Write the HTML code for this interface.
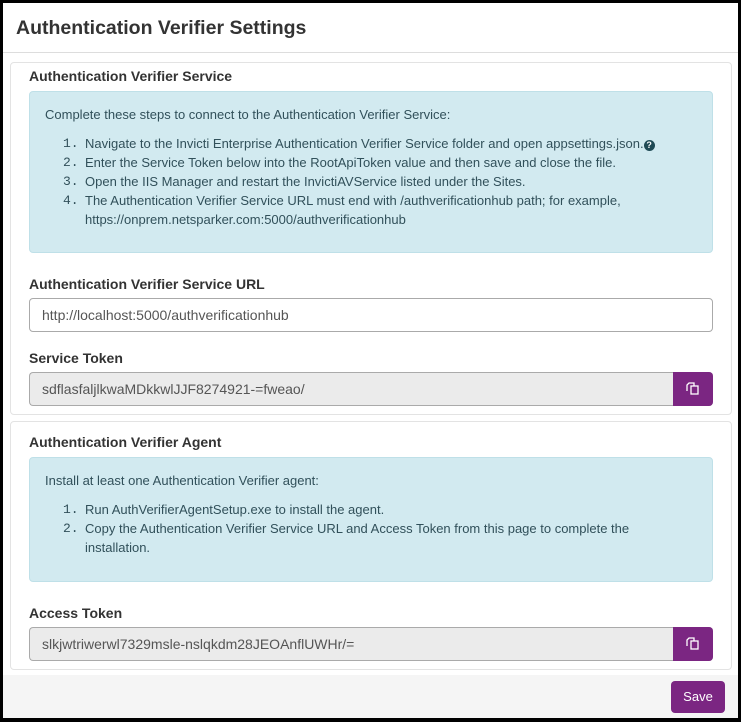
<!DOCTYPE html>
<html><head><style>
*{box-sizing:border-box;margin:0;padding:0}
body{width:741px;height:722px;background:#000;font-family:"Liberation Sans",sans-serif;color:#333;overflow:hidden;position:relative}
.page{position:absolute;left:3px;top:3px;width:735px;height:715px;background:#fff}
.hdr{position:absolute;left:0;top:0;width:735px;height:50px;border-bottom:1px solid #ddd;font-size:19.5px;font-weight:bold;color:#333;padding:14px 0 0 13px}
.panel{position:absolute;left:7px;width:722px;border:1px solid #e3e3e3;border-radius:4px;background:#fff}
.pt{position:absolute;left:18px;font-size:14px;font-weight:bold;color:#333}
.alert{position:absolute;left:18px;width:684px;background:#d2eaf0;border:1px solid #bfe0e8;border-radius:4px;font-size:13px;color:#31505a}
.alert p{position:absolute;left:15px}
.alert ol{position:absolute;left:15px;list-style:none}
.alert li{position:relative;padding-left:40px;line-height:19px}
.alert li span{position:absolute;left:18px;font-family:"Liberation Mono",monospace}
.lbl{position:absolute;left:18px;font-size:14px;font-weight:bold;color:#333}
.inp{position:absolute;left:18px;width:684px;height:34px;border:1px solid #aaa;border-radius:4px;font-size:14px;color:#555;padding:8px 12px;background:#fff}
.inp.ro{background:#ebebeb;border-right:none}
.cp{position:absolute;right:0;top:-1px;width:40px;height:34px;background:#7b2682;border-radius:0 4px 4px 0}
.foot{position:absolute;left:0;top:672px;width:735px;height:43px;background:#f5f5f5}
.save{position:absolute;left:668px;top:678px;width:54px;height:32px;background:#7b2682;border-radius:4px;color:#fff;font-size:13px;text-align:center;line-height:32px}
</style></head><body><div class="page">
<div class="hdr">Authentication Verifier Settings</div>
<div class="panel" style="top:59px;height:353px">
<div class="pt" style="top:5px">Authentication Verifier Service</div>
<div class="alert" style="top:28px;height:162px">
<p style="top:15px">Complete these steps to connect to the Authentication Verifier Service:</p>
<ol style="top:42px">
<li><span>1.</span>Navigate to the Invicti Enterprise Authentication Verifier Service folder and open appsettings.json.<b style="display:inline-block;width:11px;height:11px;border-radius:50%;background:#1f4a55;color:#fff;font-size:9px;line-height:11px;text-align:center;vertical-align:0">?</b></li>
<li><span>2.</span>Enter the Service Token below into the RootApiToken value and then save and close the file.</li>
<li><span>3.</span>Open the IIS Manager and restart the InvictiAVService listed under the Sites.</li>
<li><span>4.</span>The Authentication Verifier Service URL must end with /authverificationhub path; for example,<br>https://onprem.netsparker.com:5000/authverificationhub</li>
</ol></div>
<div class="lbl" style="top:213px">Authentication Verifier Service URL</div>
<div class="inp" style="top:235px">http://localhost:5000/authverificationhub</div>
<div class="lbl" style="top:287px">Service Token</div>
<div class="inp ro" style="top:309px">sdflasfaljlkwaMDkkwlJJF8274921-=fweao/<div class="cp"><svg width="40" height="34" viewBox="0 0 40 34"><g fill="none" stroke="#fff" stroke-width="1.3"><path d="M14 19V13l2-2h5v3"/><rect x="18" y="14" width="7" height="8"/></g></svg></div></div>
</div>
<div class="panel" style="top:418px;height:249px">
<div class="pt" style="top:12px">Authentication Verifier Agent</div>
<div class="alert" style="top:35px;height:125px">
<p style="top:15px">Install at least one Authentication Verifier agent:</p>
<ol style="top:42px">
<li><span>1.</span>Run AuthVerifierAgentSetup.exe to install the agent.</li>
<li><span>2.</span>Copy the Authentication Verifier Service URL and Access Token from this page to complete the<br>installation.</li>
</ol></div>
<div class="lbl" style="top:183px">Access Token</div>
<div class="inp ro" style="top:205px">slkjwtriwerwl7329msle-nslqkdm28JEOAnflUWHr/=<div class="cp"><svg width="40" height="34" viewBox="0 0 40 34"><g fill="none" stroke="#fff" stroke-width="1.3"><path d="M14 19V13l2-2h5v3"/><rect x="18" y="14" width="7" height="8"/></g></svg></div></div>
</div>
<div class="foot"></div>
<div class="save">Save</div>
</div></body></html>
